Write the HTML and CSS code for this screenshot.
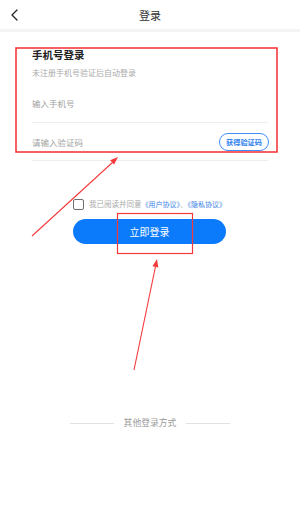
FILE: index.html
```html
<!DOCTYPE html>
<html lang="zh-CN">
<head>
<meta charset="utf-8">
<title>登录</title>
<link rel="stylesheet" href="styles.css">
</head>
<body>
<div class="page">
  <header class="topbar">
    <div class="back">
      <svg width="9" height="12" viewBox="0 0 9 12"><path d="M7 1 L2 6 L7 11" fill="none" stroke="#222" stroke-width="1.3" stroke-linecap="round" stroke-linejoin="round"/></svg>
    </div>
    <div class="title">登录</div>
    <div></div>
  </header>
  <div class="sep"></div>

  <section class="form">
    <h1 class="form-title">手机号登录</h1>
    <p class="form-sub">未注册手机号验证后自动登录</p>
    <div class="field field-phone"><span class="ph">输入手机号</span></div>
    <div class="field field-code">
      <span class="ph">请输入验证码</span>
      <span class="code-btn">获得验证码</span>
    </div>
  </section>

  <section class="actions">
    <div class="agree">
      <span class="checkbox"></span>
      <span class="agree-text">我已阅读并同意<span class="link">《用户协议》</span>、<span class="link">《隐私协议》</span></span>
    </div>
    <div class="login-btn">立即登录</div>
  </section>

  <div class="other">
    <span class="line"></span>
    <span class="other-text">其他登录方式</span>
    <span class="line"></span>
  </div>

  <svg class="annot" width="300" height="513" viewBox="0 0 300 513">
    <rect x="16" y="48" width="261" height="104" fill="none" stroke="#f5393b" stroke-width="1.6"/>
    <rect x="117.5" y="213.5" width="75" height="40" fill="none" stroke="#f5393b" stroke-width="1.2"/>
    <line x1="32" y1="236" x2="113" y2="162" stroke="#f5393b" stroke-width="1.1"/>
    <polygon points="118,157 114.1,164.6 110.1,160.2" fill="#f5393b"/>
    <line x1="134" y1="370" x2="155.6" y2="266" stroke="#f5393b" stroke-width="1.1"/>
    <polygon points="157,259 158.3,267.4 152.5,266.2" fill="#f5393b"/>
  </svg>
</div>
</body>
</html>
```
FILE: styles.css
```css
* { box-sizing: border-box; }
html, body { margin: 0; padding: 0; background: #fff; }
body { font-family: "Noto Sans CJK SC", "Noto Sans", sans-serif; color: #333; }
.page { position: relative; width: 300px; height: 513px; overflow: hidden; }

.topbar {
  height: 29px;
  display: grid;
  grid-template-columns: 1fr auto 1fr;
  align-items: center;
}
.back { padding-left: 10px; display: flex; align-items: center; }
.back svg { display: block; }
.title { font-size: 11px; color: #333; line-height: 14px; }
.sep { height: 3px; background: #f4f4f4; }

.form { padding: 16px 32px 0 32px; }
.form-title { margin: 0; font-size: 10.5px; line-height: 14px; font-weight: bold; color: #222; }
.form-sub { margin: 6px 0 0 0; font-size: 8px; line-height: 10px; color: #aaa; }
.field {
  display: flex;
  align-items: center;
  justify-content: space-between;
  border-bottom: 1px solid #eeeeee;
}
.field-phone { margin-top: 5px; height: 40px; }
.field-code { height: 38px; }
.ph { font-size: 8.5px; color: #a2a2a2; line-height: 12px; }
.code-btn {
  margin-right: -1px;
  width: 50px; height: 18px;
  border: 1px solid #3d8ef8;
  border-radius: 9px;
  font-size: 7.2px;
  font-weight: bold;
  color: #2f7fef;
  display: flex; align-items: center; justify-content: center;
}

.actions { width: 154px; margin: 37px auto 0 auto; }
.agree { display: flex; align-items: center; height: 12px; }
.checkbox {
  width: 11px; height: 11px;
  border: 1.5px solid #6f6f6f;
  border-radius: 2px;
  flex: none;
}
.agree-text { margin-left: 5px; font-size: 7.5px; color: #aaa; white-space: nowrap; line-height: 10px; }
.link { color: #3b82e6; font-size: 7px; }
.login-btn {
  margin-top: 9px;
  width: 153px; height: 25px;
  border-radius: 13px;
  background: #0b7bfb;
  color: #fff;
  font-size: 10px;
  display: flex; align-items: center; justify-content: center;
}

.other {
  margin-top: 173px;
  display: flex; align-items: center; justify-content: center;
  height: 12px;
}
.line { width: 44px; height: 1px; background: #e2e2e2; }
.other-text { margin: 0 10px; font-size: 8.8px; color: #9a9a9a; line-height: 12px; }

.annot { position: absolute; left: 0; top: 0; pointer-events: none; }
```
